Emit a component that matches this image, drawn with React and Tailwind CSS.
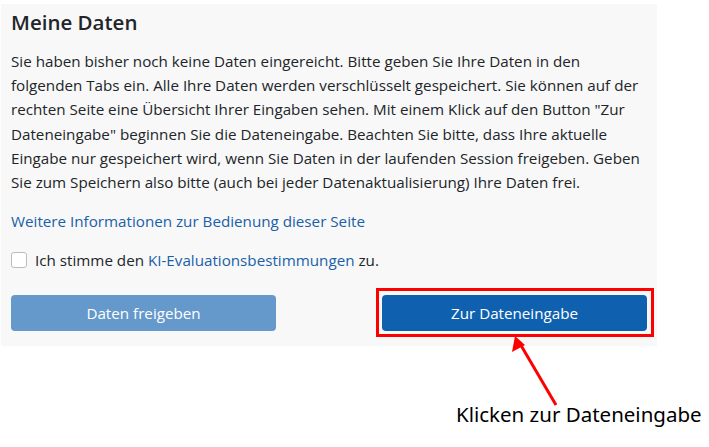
import React from "react";

export default function App() {
  const lines = [
    "Sie haben bisher noch keine Daten eingereicht. Bitte geben Sie Ihre Daten in den",
    "folgenden Tabs ein. Alle Ihre Daten werden verschlüsselt gespeichert. Sie können auf der",
    "rechten Seite eine Übersicht Ihrer Eingaben sehen. Mit einem Klick auf den Button \"Zur",
    "Dateneingabe\" beginnen Sie die Dateneingabe. Beachten Sie bitte, dass Ihre aktuelle",
    "Eingabe nur gespeichert wird, wenn Sie Daten in der laufenden Session freigeben. Geben",
    "Sie zum Speichern also bitte (auch bei jeder Datenaktualisierung) Ihre Daten frei.",
  ];
  return (
    <div className="relative w-[709px] h-[447px] bg-white overflow-hidden" style={{ fontFamily: '"Open Sans", "Noto Sans", sans-serif' }}>
      <div className="absolute left-[1px] top-[4px] w-[656px] bg-[#f8f8f8] pl-[10px] pr-[10px] pt-[6px] pb-[15px] text-[#212529]">
        <h2 className="text-[20.5px] leading-[24px] font-semibold">Meine Daten</h2>
        <p className="mt-[15px] text-[15.2px] leading-[24.2px]">
          {lines.map((l, i) => (
            <span key={i} className="block whitespace-nowrap">{l}</span>
          ))}
        </p>
        <div className="mt-[15px] text-[15.2px] leading-[24px] text-[#1a5fa8]">
          Weitere Informationen zur Bedienung dieser Seite
        </div>
        <div className="mt-[15px] flex items-center h-[24px] text-[15.2px]">
          <span className="w-[16px] h-[16px] rounded-[3px] border border-[#bcbcbc] bg-white"></span>
          <span className="ml-[8px]">Ich stimme den <span className="text-[#1a5fa8]">KI-Evaluationsbestimmungen</span> zu.</span>
        </div>
        <div className="mt-[23px] flex justify-between">
          <button className="w-[265px] h-[36px] rounded-[4px] bg-[#6599cc] text-white text-[15.2px]">Daten freigeben</button>
          <div className="relative">
            <button className="w-[265px] h-[36px] rounded-[4px] bg-[#1060b0] text-white text-[15.2px]">Zur Dateneingabe</button>
            <div className="absolute left-[-6px] top-[-7px] right-[-7px] bottom-[-6px] border-[3px] border-[#ff0000]"></div>
          </div>
        </div>
      </div>
      <svg className="absolute left-0 top-0" width="709" height="447">
        <line x1="556" y1="405" x2="519" y2="342" stroke="#ff0000" strokeWidth="3" />
        <polygon points="515,336 512,352 525,345" fill="#ff0000" />
      </svg>
      <div className="absolute left-[456px] top-[399px] text-[20.5px] leading-[30px] text-black" style={{ fontFamily: '"Noto Sans", "Open Sans", sans-serif' }}>
        Klicken zur Dateneingabe
      </div>
    </div>
  );
}
